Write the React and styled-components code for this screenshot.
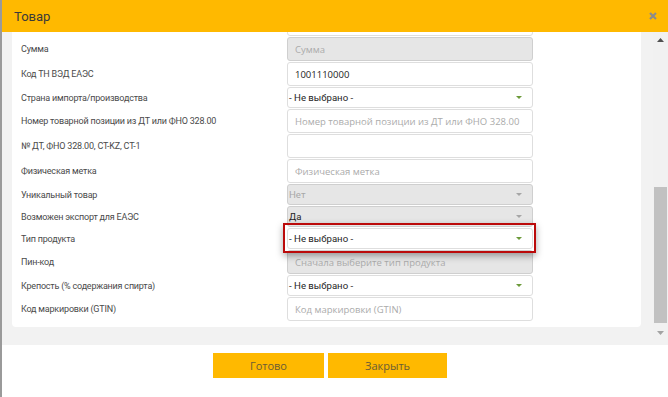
import styled, { createGlobalStyle } from "styled-components";

const GlobalStyle = createGlobalStyle`
    html, body {
        margin: 0;
        padding: 0;
        width: 668px;
        height: 397px;
        overflow: hidden;
        background: #9a9a9a;
    }
`;

// first row is scrolled out of view, only its input's bottom edge shows
const rows = [
    { label: "", type: "input" },
    { label: "Сумма", type: "input", placeholder: "Сумма", disabled: true },
    { label: "Код ТН ВЭД ЕАЭС", type: "input", value: "1001110000" },
    { label: "Страна импорта/производства", type: "select", value: "- Не выбрано -" },
    { label: "Номер товарной позиции из ДТ или ФНО 328.00", type: "input", placeholder: "Номер товарной позиции из ДТ или ФНО 328.00" },
    { label: "№ ДТ, ФНО 328.00, CT-KZ, CT-1", type: "input" },
    { label: "Физическая метка", type: "input", placeholder: "Физическая метка" },
    { label: "Уникальный товар", type: "select", value: "Нет", disabled: true, muted: true },
    { label: "Возможен экспорт для ЕАЭС", type: "select", value: "Да", disabled: true },
    { label: "Тип продукта", type: "select", value: "- Не выбрано -", highlight: true },
    { label: "Пин-код", type: "input", placeholder: "Сначала выберите тип продукта", disabled: true },
    { label: "Крепость (% содержания спирта)", type: "select", value: "- Не выбрано -" },
    { label: "Код маркировки (GTIN)", type: "input", placeholder: "Код маркировки (GTIN)" },
];

const CloseIcon = () => (
    <svg width="8" height="8" viewBox="0 0 8 8">
        <path d="M1 1 L7 7 M7 1 L1 7" stroke="#8c8c8c" strokeWidth="2.2" />
    </svg>
);

const Field = ({ row }) => {
    if (row.type === "select") {
        return (
            <SelectBox disabled={row.disabled} muted={row.muted} highlight={row.highlight}>
                <span>{row.value}</span>
                <Caret disabled={row.disabled} />
            </SelectBox>
        );
    }
    return (
        <InputBox disabled={row.disabled}>
            {row.value ? <span>{row.value}</span> : <Placeholder>{row.placeholder}</Placeholder>}
        </InputBox>
    );
};

const App = () => {
    return (
        <>
            <GlobalStyle />
            <Modal>
                <Header>
                    <span>Товар</span>
                    <CloseIcon />
                </Header>
                <Body>
                    <ScrollView>
                        <Card>
                            {rows.map((row, i) => (
                                <Row key={i}>
                                    <Label>{row.label}</Label>
                                    <Field row={row} />
                                </Row>
                            ))}
                        </Card>
                    </ScrollView>
                    <ScrollBar>
                        <ArrowButton>
                            <svg width="7" height="4" viewBox="0 0 7 4">
                                <path d="M0 4 L3.5 0 L7 4 Z" fill="#505050" />
                            </svg>
                        </ArrowButton>
                        <Track>
                            <Thumb />
                        </Track>
                        <ArrowButton>
                            <svg width="7" height="4" viewBox="0 0 7 4">
                                <path d="M0 0 L3.5 4 L7 0 Z" fill="#a3a3a3" />
                            </svg>
                        </ArrowButton>
                    </ScrollBar>
                </Body>
                <Footer>
                    <Button>Готово</Button>
                    <Button>Закрыть</Button>
                </Footer>
            </Modal>
        </>
    );
};

export default App;

const Modal = styled.div`
    margin-left: 2px;
    width: 666px;
    height: 397px;
    background: #ffffff;
    display: flex;
    flex-direction: column;
`;

const Header = styled.div`
    position: relative;
    z-index: 1;
    height: 32px;
    flex-shrink: 0;
    background: #ffb900;
    display: flex;
    align-items: center;
    justify-content: space-between;
    padding: 0 11px 0 12px;
    box-sizing: border-box;

    span {
        font-family: Roboto, "Liberation Sans", sans-serif;
        font-size: 13px;
        color: #3a3a3a;
        padding-top: 1px;
    }
`;

const Body = styled.div`
    height: 313px;
    flex-shrink: 0;
    background: #f2f2f2;
    display: flex;
    padding-bottom: 5px;
    box-sizing: border-box;
`;

const ScrollView = styled.div`
    flex: 1;
    overflow: hidden;
    display: flex;
    flex-direction: column;
    justify-content: flex-end;
`;

const Card = styled.div`
    flex-shrink: 0;
    margin: 0 12px 13px 10px;
    padding: 0 0 6px 9px;
    background: #ffffff;
    border-radius: 0 0 4px 4px;
    display: flex;
    flex-direction: column;
    gap: 1px;
`;

const Row = styled.div`
    display: grid;
    grid-template-columns: 266px 246px;
    align-items: center;
`;

const Label = styled.div`
    font-family: Roboto, "Liberation Sans", sans-serif;
    font-size: 9px;
    letter-spacing: -0.2px;
    color: #4a4a4a;
`;

const InputBox = styled.div`
    height: 24px;
    box-sizing: border-box;
    border: 1px solid ${({ disabled }) => (disabled ? "#cfcfcf" : "#dedede")};
    border-radius: 3px;
    background: ${({ disabled }) => (disabled ? "#e6e6e6" : "#ffffff")};
    padding: 0 7px;
    display: flex;
    align-items: center;
    font-family: "Open Sans", "DejaVu Sans", sans-serif;
    font-size: 9.5px;
    color: #222222;
    white-space: nowrap;
    overflow: hidden;
`;

const Placeholder = styled.span`
    color: #ababab;
`;

const SelectBox = styled.div`
    position: relative;
    height: 21px;
    box-sizing: border-box;
    border: 1px solid ${({ disabled }) => (disabled ? "#cfcfcf" : "#dedede")};
    border-radius: 3px;
    background: ${({ disabled }) => (disabled ? "#e6e6e6" : "#ffffff")};
    padding: 0 10px 0 1px;
    display: flex;
    align-items: center;
    justify-content: space-between;
    font-family: Roboto, "Liberation Sans", sans-serif;
    font-size: 9.6px;
    color: ${({ muted }) => (muted ? "#a8a8a8" : "#1e1e1e")};

    ${({ highlight }) =>
        highlight &&
        `
        &::after {
            content: "";
            position: absolute;
            top: -6px;
            bottom: -5px;
            left: -5px;
            right: -4px;
            border: 2px solid #bb0a0a;
            box-shadow: 0 3px 7px rgba(0, 0, 0, 0.35);
            pointer-events: none;
        }
    `}
`;

const Caret = styled.span`
    width: 0;
    height: 0;
    border-left: 3px solid transparent;
    border-right: 3px solid transparent;
    border-top: 3px solid ${({ disabled }) => (disabled ? "#a6a6a6" : "#6c9a3a")};
`;

const ScrollBar = styled.div`
    width: 15px;
    flex-shrink: 0;
    background: #f1f1f1;
    display: flex;
    flex-direction: column;
`;

const ArrowButton = styled.div`
    height: 15px;
    display: flex;
    align-items: center;
    justify-content: center;
`;

const Track = styled.div`
    flex: 1;
    display: flex;
    flex-direction: column;
    justify-content: flex-end;
    padding: 0 1px 2px 1px;
`;

const Thumb = styled.div`
    height: 136px;
    background: #c1c1c1;
`;

const Footer = styled.div`
    flex: 1;
    display: flex;
    justify-content: center;
    align-items: flex-start;
    gap: 4px;
    padding: 8px 10px 0 0;
`;

const Button = styled.div`
    height: 25px;
    padding: 0 37px;
    background: #ffb900;
    display: flex;
    align-items: center;
    font-family: "Open Sans", "DejaVu Sans", sans-serif;
    font-size: 11px;
    color: #6a5c36;
`;
